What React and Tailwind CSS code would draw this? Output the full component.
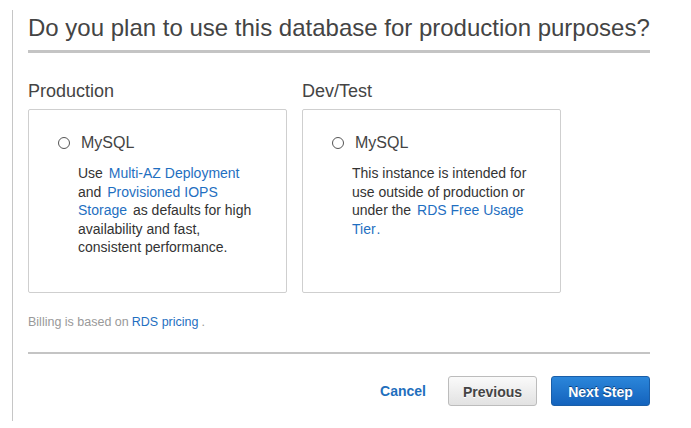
export default function App() {
  const font = { fontFamily: '"Liberation Sans", Arial, sans-serif' };
  const link = "text-[#1f6fc1] mx-[2px]";
  return (
    <div className="w-[691px] h-[428px] bg-white pt-[10px]" style={font}>
      <div className="ml-[12px] border-l border-[#c6c6c6] h-[411px] pl-[15px] w-[639px]">
        <div className="w-[622px]">
          <h1 className="pt-[4px] pb-[8px] text-[24px] leading-[28px] text-[#444] border-b-[3px] border-[#c4c4c4] whitespace-nowrap">
            Do you plan to use this database for production purposes?
          </h1>
          <div className="flex gap-[15px] mt-[28px]">
            <div className="flex flex-col">
              <div className="text-[18px] leading-[20px] text-[#444] mb-[8px]">Production</div>
              <div className="w-[259px] h-[184px] border border-[#cfcfcf] rounded-[2px] pt-[23px] pl-[29px]">
                <div className="flex items-center">
                  <span className="w-[12px] h-[12px] rounded-full border border-[#555] bg-white"></span>
                  <span className="ml-[11px] text-[16px] leading-[20px] text-[#444]">MySQL</span>
                </div>
                <p className="mt-[11px] ml-[20px] w-[200px] text-[14px] leading-[18.57px] text-[#333] whitespace-nowrap">
                  Use<span className={link}> Multi-AZ Deployment </span>
                  <br />
                  and<span className={link}> Provisioned IOPS </span>
                  <br />
                  <span className="text-[#1f6fc1] mr-[2px]">Storage </span> as defaults for high
                  <br />
                  availability and fast,
                  <br />
                  consistent performance.
                </p>
              </div>
            </div>
            <div className="flex flex-col">
              <div className="text-[18px] leading-[20px] text-[#444] mb-[8px]">Dev/Test</div>
              <div className="w-[259px] h-[184px] border border-[#cfcfcf] rounded-[2px] pt-[23px] pl-[29px]">
                <div className="flex items-center">
                  <span className="w-[12px] h-[12px] rounded-full border border-[#555] bg-white"></span>
                  <span className="ml-[11px] text-[16px] leading-[20px] text-[#444]">MySQL</span>
                </div>
                <p className="mt-[11px] ml-[20px] w-[200px] text-[14px] leading-[18.57px] text-[#333] whitespace-nowrap">
                  This instance is intended for
                  <br />
                  use outside of production or
                  <br />
                  under the<span className={link}> RDS Free Usage</span>
                  <br />
                  <span className="text-[#1f6fc1]">Tier</span>
                  <span className="text-[#1f6fc1] ml-[1px]">.</span>
                </p>
              </div>
            </div>
          </div>
          <p className="mt-[21px] text-[12.5px] leading-[16px] text-[#999]">
            Billing is based on<span className="text-[#1f6fc1] mx-[3px]">RDS pricing</span>.
          </p>
          <div className="mt-[22px] border-b-[2px] border-[#c4c4c4]"></div>
          <div className="flex justify-end items-center mt-[22px]">
            <span className="text-[14px] font-bold text-[#1f6fbd] mr-[22px]">Cancel</span>
            <button
              className="w-[89px] h-[30px] pt-[2px] rounded-[3px] border border-[#bcbcbc] bg-gradient-to-b from-[#fafafa] to-[#e2e2e2] text-[14px] font-bold text-[#444] [text-shadow:0_1px_0_#fff]"
              style={font}
            >
              Previous
            </button>
            <button
              className="ml-[14px] w-[99px] h-[30px] pt-[2px] rounded-[3px] border border-[#1a5ea8] bg-gradient-to-b from-[#2b86da] to-[#1463bd] text-[14px] font-bold text-white [text-shadow:0_-1px_0_#0b3f7a]"
              style={font}
            >
              Next Step
            </button>
          </div>
        </div>
      </div>
    </div>
  );
}
